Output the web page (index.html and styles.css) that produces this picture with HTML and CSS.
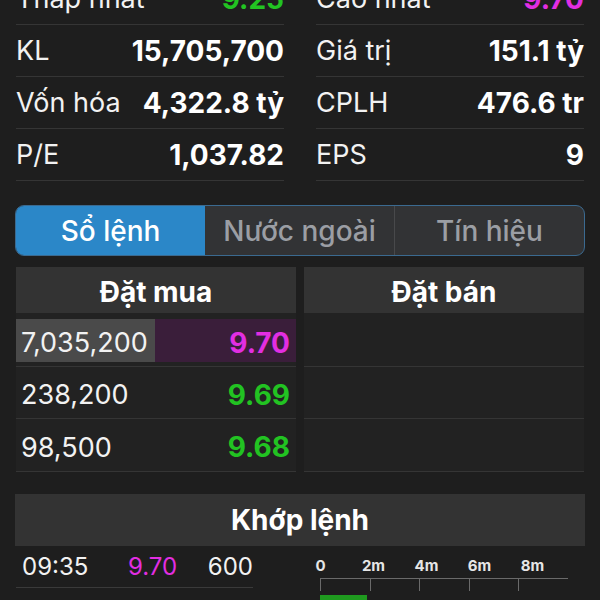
FILE: index.html
```html
<!DOCTYPE html>
<html lang="vi">
<head>
    <meta charset="UTF-8">
    <meta name="viewport" content="width=device-width, initial-scale=1.0">
    <title>Chi tiết mã</title>
    <link rel="stylesheet" href="styles.css">
</head>
<body>
    <div class="stats">
        <div class="stat"><span class="label">Thấp nhất</span><span class="value green">9.25</span></div>
        <div class="stat"><span class="label">Cao nhất</span><span class="value purple">9.70</span></div>
        <div class="stat"><span class="label">KL</span><span class="value">15,705,700</span></div>
        <div class="stat"><span class="label">Giá trị</span><span class="value">151.1 tỷ</span></div>
        <div class="stat"><span class="label">Vốn hóa</span><span class="value">4,322.8 tỷ</span></div>
        <div class="stat"><span class="label">CPLH</span><span class="value">476.6 tr</span></div>
        <div class="stat"><span class="label">P/E</span><span class="value">1,037.82</span></div>
        <div class="stat"><span class="label">EPS</span><span class="value">9</span></div>
    </div>

    <div class="tabs">
        <div class="tab active">Sổ lệnh</div>
        <div class="tab">Nước ngoài</div>
        <div class="tab">Tín hiệu</div>
    </div>

    <div class="book">
        <div class="side">
            <div class="side-head">Đặt mua</div>
            <div class="order">
                <span class="vol top">7,035,200</span>
                <span class="price purple ceil">9.70</span>
            </div>
            <div class="order">
                <span class="vol">238,200</span>
                <span class="price green">9.69</span>
            </div>
            <div class="order">
                <span class="vol">98,500</span>
                <span class="price green">9.68</span>
            </div>
        </div>
        <div class="side">
            <div class="side-head">Đặt bán</div>
            <div class="order"></div>
            <div class="order"></div>
            <div class="order"></div>
        </div>
    </div>

    <div class="match-head">Khớp lệnh</div>
    <div class="match">
        <div class="trades">
            <div class="trade">
                <span class="t-time">09:35</span>
                <span class="t-price purple">9.70</span>
                <span class="t-vol">600</span>
            </div>
        </div>
        <div class="chart">
            <div class="axis-labels">
                <span>0</span><span>2m</span><span>4m</span><span>6m</span><span>8m</span>
            </div>
            <div class="axis">
                <span class="tick"></span><span class="tick"></span><span class="tick"></span><span class="tick"></span><span class="tick"></span>
            </div>
            <div class="bar" style="width: 47px;"></div>
        </div>
    </div>
</body>
</html>
```

FILE: styles.css
```css
body {
    margin: 0;
    background-color: #1e1e1e;
    color: #ffffff;
    font-family: Inter, "Noto Sans", sans-serif;
    overflow: hidden;
}
.green {
    color: #22c322;
}
.purple {
    color: #e22ee2;
}
.stats {
    display: grid;
    grid-template-columns: 1fr 1fr;
    column-gap: 32px;
    padding: 0 16px;
    margin-top: -27px;
}
.stat {
    height: 51px;
    display: flex;
    justify-content: space-between;
    align-items: center;
    border-bottom: 1px solid #353535;
}
.label {
    font-size: 27px;
    color: #f2f2f2;
}
.value {
    font-size: 28px;
    font-weight: 700;
}
.tabs {
    display: flex;
    margin: 24px 15px 0 15px;
    height: 49px;
    border: 1.5px solid #3b6a90;
    border-radius: 9px;
    overflow: hidden;
    background: #323335;
}
.tab {
    flex: 1;
    display: flex;
    align-items: center;
    justify-content: center;
    font-size: 28px;
    font-weight: 500;
    color: #9b9ea4;
    border-left: 1px solid #48494b;
}
.tab:first-child {
    border-left: none;
}
.tab.active {
    background: #2b87c8;
    color: #ffffff;
}
.tab.active + .tab {
    border-left: none;
}
.book {
    display: flex;
    gap: 8px;
    margin: 11px 16px 0 16px;
}
.side {
    flex: 1;
    background: #222222;
}
.side-head {
    height: 46px;
    padding-top: 4px;
    box-sizing: border-box;
    background: #333333;
    display: flex;
    align-items: center;
    justify-content: center;
    font-size: 28px;
    font-weight: 700;
}
.order {
    height: 52px;
    box-sizing: border-box;
    padding: 4px 0;
    display: flex;
    border-bottom: 1px solid #353535;
}
.side-head + .order {
    height: 54px;
    padding-top: 6px;
}
.order:last-child {
    height: 53px;
}
.vol {
    width: 139px;
    display: flex;
    align-items: center;
    padding: 4px 0 0 5px;
    box-sizing: border-box;
    font-size: 27px;
    color: #f2f2f2;
}
.vol.top {
    background: #4a4a4a;
}
.price {
    flex: 1;
    display: flex;
    align-items: center;
    justify-content: flex-end;
    padding: 4px 6px 0 0;
    font-size: 28px;
    font-weight: 700;
}
.price.ceil {
    background: #3a1e3a;
}
.match-head {
    margin: 22px 15px 0 15px;
    height: 52px;
    background: #333333;
    display: flex;
    align-items: center;
    justify-content: center;
    font-size: 28px;
    font-weight: 700;
}
.match {
    display: flex;
    gap: 67px;
    padding: 0 16px;
}
.trades {
    width: 237px;
}
.trade {
    height: 41px;
    display: flex;
    align-items: center;
    font-size: 24px;
    color: #f2f2f2;
    border-bottom: 1px solid #3a3a3a;
}
.t-time {
    width: 106px;
    padding-left: 6px;
}
.t-price {
    width: 80px;
}
.chart {
    flex: 1;
    padding-top: 10px;
}
.axis-labels {
    display: flex;
    margin-left: -26px;
    font-size: 15px;
    font-weight: 700;
    color: #e6e6e6;
}
.axis-labels span {
    width: 53px;
    text-align: center;
}
.axis {
    display: flex;
    width: 248px;
    height: 12px;
    margin-top: 3px;
    border-top: 1px solid #6a6a6a;
}
.tick {
    width: 53px;
    border-left: 1px solid #6a6a6a;
    box-sizing: border-box;
}
.bar {
    height: 8px;
    margin-top: 4px;
    background: #1f9a1f;
}
```
